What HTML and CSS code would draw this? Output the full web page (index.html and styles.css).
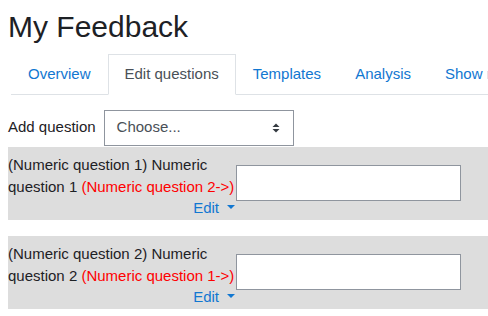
FILE: index.html
```html
<!DOCTYPE html>
<html lang="en">
<head>
  <meta charset="UTF-8">
  <meta name="viewport" content="width=device-width, initial-scale=1.0">
  <title>My Feedback</title>
  <link rel="stylesheet" href="styles.css">
</head>
<body>
  <div class="page">
    <h2 class="page-title">My Feedback</h2>

    <ul class="tabs">
      <li><a class="tab" href="#">Overview</a></li>
      <li><span class="tab active">Edit questions</span></li>
      <li><a class="tab" href="#">Templates</a></li>
      <li><a class="tab" href="#">Analysis</a></li>
      <li><a class="tab" href="#">Show responses</a></li>
    </ul>

    <div class="add-row">
      <label class="add-label">Add question</label>
      <div class="select">
        <span>Choose...</span>
        <svg class="select-arrows" width="8" height="10" viewBox="0 0 8 10">
          <path d="M0.5 4 L4 0.5 L7.5 4 Z" fill="#343a40"/>
          <path d="M0.5 6 L4 9.5 L7.5 6 Z" fill="#343a40"/>
        </svg>
      </div>
    </div>

    <div class="item">
      <div class="item-label">
        <div>(Numeric question 1) Numeric question 1 <span class="depend">(Numeric question 2-&gt;)</span></div>
        <div class="item-edit"><a href="#">Edit</a><span class="caret"></span></div>
      </div>
      <div class="item-input"></div>
    </div>

    <div class="item">
      <div class="item-label">
        <div>(Numeric question 2) Numeric question 2 <span class="depend">(Numeric question 1-&gt;)</span></div>
        <div class="item-edit"><a href="#">Edit</a><span class="caret"></span></div>
      </div>
      <div class="item-input"></div>
    </div>
  </div>
</body>
</html>
```

FILE: styles.css
```css
html, body {
  overflow: hidden;
}
body {
  margin: 0;
  font-family: "Liberation Sans", Arial, sans-serif;
  font-size: 15px;
  line-height: 1.5;
  color: #1d2125;
  background: #fff;
}
a {
  color: #1177d1;
  text-decoration: none;
}
.page {
  width: 540px;
  padding: 9px 8px 0;
}
.page-title {
  font-size: 30px;
  font-weight: normal;
  line-height: 1.2;
  margin: 0 0 9px;
}
.tabs {
  display: flex;
  list-style: none;
  margin: 0 0 0 3px;
  padding: 0;
  border-bottom: 1px solid #dee2e6;
}
.tab {
  display: block;
  padding: 8px 16px;
  border: 1px solid transparent;
  margin-bottom: -1px;
  white-space: nowrap;
}
.tab.active {
  color: #495057;
  background: #fff;
  border-color: #dee2e6 #dee2e6 #fff;
}
.add-row {
  display: flex;
  align-items: center;
  gap: 8px;
  margin: 15px 0 1px;
}
.select {
  width: 190px;
  height: 36px;
  box-sizing: border-box;
  border: 1px solid #8f959e;
  padding: 0 13px 0 12px;
  display: flex;
  align-items: center;
  justify-content: space-between;
  color: #495057;
}
.item {
  display: flex;
  align-items: center;
  background: #ddd;
  margin-bottom: 16px;
}
.item-label {
  width: 228px;
  box-sizing: border-box;
  padding: 7px 1px 0.5px 0;
}
.depend {
  color: #f00;
}
.item-edit {
  text-align: right;
  margin-top: -2px;
}
.caret {
  display: inline-block;
  margin-left: 8px;
  vertical-align: 4px;
  border-top: 4.5px solid #1177d1;
  border-left: 4px solid transparent;
  border-right: 4px solid transparent;
}
.item-input {
  width: 225px;
  height: 36px;
  box-sizing: border-box;
  background: #fff;
  border: 1px solid #8f959e;
}
```
